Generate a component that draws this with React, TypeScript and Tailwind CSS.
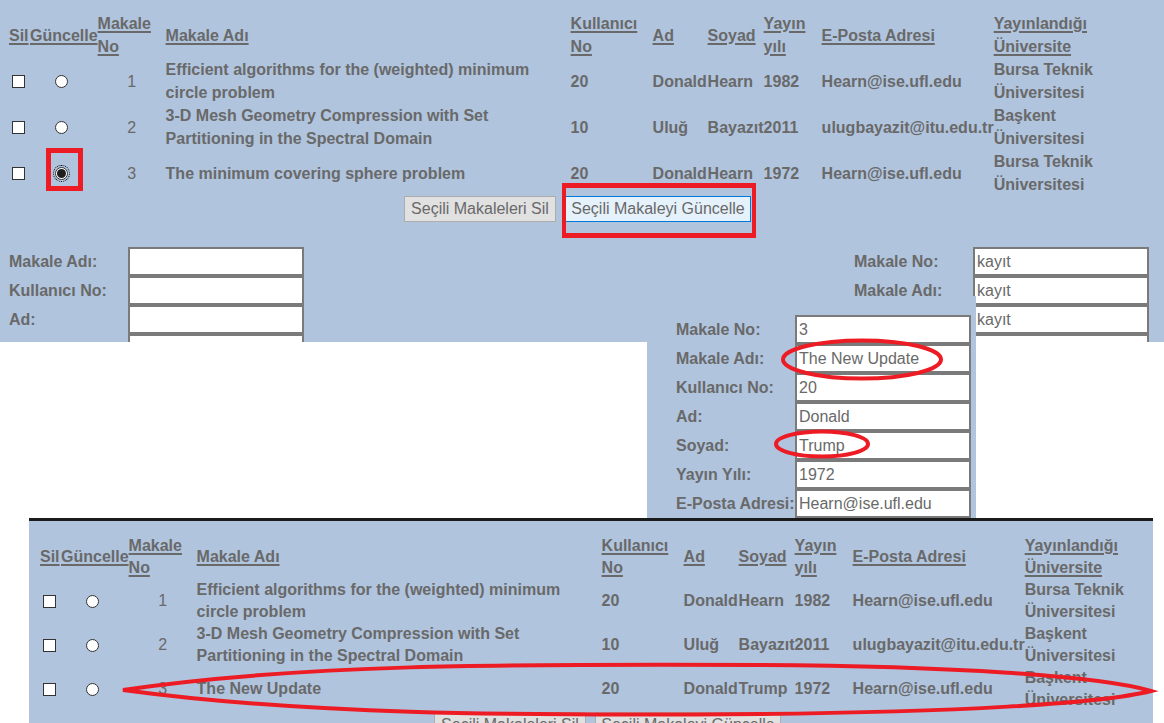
import React from "react";

type Row = {
  no: string;
  title: string;
  kno: string;
  ad: string;
  soyad: string;
  yil: string;
  mail: string;
  uni: string;
};

const topRows: Row[] = [
  {
    no: "1",
    title: "Efficient algorithms for the (weighted) minimum circle problem",
    kno: "20",
    ad: "Donald",
    soyad: "Hearn",
    yil: "1982",
    mail: "Hearn@ise.ufl.edu",
    uni: "Bursa Teknik Üniversitesi",
  },
  {
    no: "2",
    title: "3-D Mesh Geometry Compression with Set Partitioning in the Spectral Domain",
    kno: "10",
    ad: "Uluğ",
    soyad: "Bayazıt",
    yil: "2011",
    mail: "ulugbayazit@itu.edu.tr",
    uni: "Başkent Üniversitesi",
  },
  {
    no: "3",
    title: "The minimum covering sphere problem",
    kno: "20",
    ad: "Donald",
    soyad: "Hearn",
    yil: "1972",
    mail: "Hearn@ise.ufl.edu",
    uni: "Bursa Teknik Üniversitesi",
  },
];

const bottomRows: Row[] = [
  topRows[0],
  topRows[1],
  {
    no: "3",
    title: "The New Update",
    kno: "20",
    ad: "Donald",
    soyad: "Trump",
    yil: "1972",
    mail: "Hearn@ise.ufl.edu",
    uni: "Başkent Üniversitesi",
  },
];

function Checkbox() {
  return <span className="block w-[13px] h-[13px] border border-[#333333] bg-white" />;
}

function Radio({ checked }: { checked?: boolean }) {
  return (
    <span
      className={
        checked
          ? "relative block w-[13px] h-[13px] rounded-full border border-[#333333] bg-white outline outline-1 outline-dotted outline-black outline-offset-[1px]"
          : "relative block w-[13px] h-[13px] rounded-full border border-[#333333] bg-white"
      }
    >
      {checked && <span className="absolute inset-[1px] rounded-full bg-[#1f1f1f]" />}
    </span>
  );
}

function DataTable({ rows, leading, checked }: { rows: Row[]; leading: string; checked: number }) {
  return (
    <table className={`table-fixed border-collapse ${leading}`}>
      <colgroup>
        <col className="w-[21px]" />
        <col className="w-[67px]" />
        <col className="w-[68px]" />
        <col className="w-[405px]" />
        <col className="w-[82px]" />
        <col className="w-[55px]" />
        <col className="w-[56px]" />
        <col className="w-[58px]" />
        <col className="w-[172px]" />
        <col className="w-[110px]" />
      </colgroup>
      <thead>
        <tr className="font-bold underline decoration-2 underline-offset-[2px] text-left">
          <th className="p-0 align-middle text-left">Sil</th>
          <th className="p-0 align-middle text-left whitespace-nowrap">Güncelle</th>
          <th className="p-0 align-middle text-left">Makale No</th>
          <th className="p-0 align-middle text-left">Makale Adı</th>
          <th className="p-0 align-middle text-left">Kullanıcı No</th>
          <th className="p-0 align-middle text-left">Ad</th>
          <th className="p-0 align-middle text-left">Soyad</th>
          <th className="p-0 align-middle text-left">Yayın yılı</th>
          <th className="p-0 align-middle text-left">E-Posta Adresi</th>
          <th className="p-0 align-middle text-left">Yayınlandığı Üniversite</th>
        </tr>
      </thead>
      <tbody>
        {rows.map((r, i) => (
          <tr key={i} className="font-bold">
            <td className="p-0 align-middle">
              <span className="flex ml-[3px]">
                <Checkbox />
              </span>
            </td>
            <td className="p-0 align-middle">
              <span className="flex ml-[25px]">
                <Radio checked={checked === i} />
              </span>
            </td>
            <td className="p-0 align-middle text-center font-normal">{r.no}</td>
            <td className="p-0 align-middle">{r.title}</td>
            <td className="p-0 align-middle">{r.kno}</td>
            <td className="p-0 align-middle whitespace-nowrap">{r.ad}</td>
            <td className="p-0 align-middle whitespace-nowrap">{r.soyad}</td>
            <td className="p-0 align-middle">{r.yil}</td>
            <td className="p-0 align-middle whitespace-nowrap">{r.mail}</td>
            <td className="p-0 align-middle">{r.uni}</td>
          </tr>
        ))}
      </tbody>
    </table>
  );
}

function Field({ label, value }: { label: string; value: string }) {
  return (
    <div className="flex items-center h-[29px]">
      <span className="w-[119px] font-bold whitespace-nowrap">{label}</span>
      <input
        readOnly
        defaultValue={value}
        className="w-[176px] h-[29px] border-2 border-[#7a7a7a] bg-white px-[2px] text-[16px] outline-none"
      />
    </div>
  );
}

export default function App() {
  return (
    <div className="relative w-[1164px] h-[723px] overflow-hidden bg-white [font-family:'Liberation_Sans',Arial,sans-serif] text-[16px] text-[#696969]">
      {/* Top screenshot */}
      <div className="h-[342px] bg-[#b0c4de] pt-[12px] overflow-hidden">
        <div className="ml-[9px]">
          <DataTable rows={topRows} leading="leading-[23px]" checked={2} />
        </div>
        <div className="flex gap-[9px] ml-[404px] h-[26px]">
          <button className="w-[152px] h-[26px] border border-[#adadad] bg-[#e1e1e1] text-[#696969] text-[16px] leading-none">
            Seçili Makaleleri Sil
          </button>
          <button className="w-[186px] h-[26px] border border-[#0078d7] bg-[#e5f1fb] text-[#696969] text-[16px] leading-none">
            Seçili Makaleyi Güncelle
          </button>
        </div>
        <div className="flex mt-[25px]">
          <div className="ml-[9px] flex flex-col">
            <Field label="Makale Adı:" value="" />
            <Field label="Kullanıcı No:" value="" />
            <Field label="Ad:" value="" />
            <Field label="" value="" />
          </div>
          <div className="ml-auto mr-[15px] flex flex-col">
            <Field label="Makale No:" value="kayıt" />
            <Field label="Makale Adı:" value="kayıt" />
            <Field label="" value="kayıt" />
            <Field label="" value="" />
          </div>
        </div>
      </div>

      {/* Middle screenshot (update form) */}
      <div className="absolute left-[647px] top-[296px] w-[329px] h-[222px] bg-[#b0c4de] pt-[19px] pl-[29px]">
        <Field label="Makale No:" value="3" />
        <Field label="Makale Adı:" value="The New Update" />
        <Field label="Kullanıcı No:" value="20" />
        <Field label="Ad:" value="Donald" />
        <Field label="Soyad:" value="Trump" />
        <Field label="Yayın Yılı:" value="1972" />
        <Field label="E-Posta Adresi:" value="Hearn@ise.ufl.edu" />
      </div>

      {/* Bottom screenshot */}
      <div className="absolute left-[29px] top-[518px] w-[1124px] h-[205px] border-t-[3px] border-[#1b1b1b] bg-[#b0c4de] overflow-hidden">
        <div className="ml-[11px] mt-[14px]">
          <DataTable rows={bottomRows} leading="leading-[22px]" checked={-1} />
        </div>
        <div className="flex gap-[9px] ml-[405px] h-[26px] mt-[1px]">
          <button className="w-[152px] h-[26px] border border-[#adadad] bg-[#e1e1e1] text-[#696969] text-[16px] leading-none">
            Seçili Makaleleri Sil
          </button>
          <button className="w-[186px] h-[26px] border border-[#adadad] bg-[#e1e1e1] text-[#696969] text-[16px] leading-none">
            Seçili Makaleyi Güncelle
          </button>
        </div>
      </div>

      {/* Red annotation rectangles */}
      <div className="absolute left-[46px] top-[148px] w-[37px] h-[43px] border-[5px] border-[#ed1c24]" />
      <div className="absolute left-[562px] top-[183px] w-[194px] h-[55px] border-x-4 border-y-[5px] border-[#ed1c24]" />

      {/* Red annotation ellipses */}
      <svg className="absolute left-0 top-0 pointer-events-none" width="1164" height="723" viewBox="0 0 1164 723">
        <ellipse cx="862" cy="359.5" rx="79" ry="19" fill="none" stroke="#ed1c24" strokeWidth="4" />
        <ellipse cx="822" cy="444" rx="46" ry="12.5" fill="none" stroke="#ed1c24" strokeWidth="4" />
        <path
          d="M123 690 C 300 664, 500 664, 760 665 C 950 666, 1100 676, 1151 691 C 1100 704, 950 712, 760 714 C 500 716, 300 714, 123 690 Z"
          fill="none"
          stroke="#ed1c24"
          strokeWidth="4"
        />
      </svg>
    </div>
  );
}
